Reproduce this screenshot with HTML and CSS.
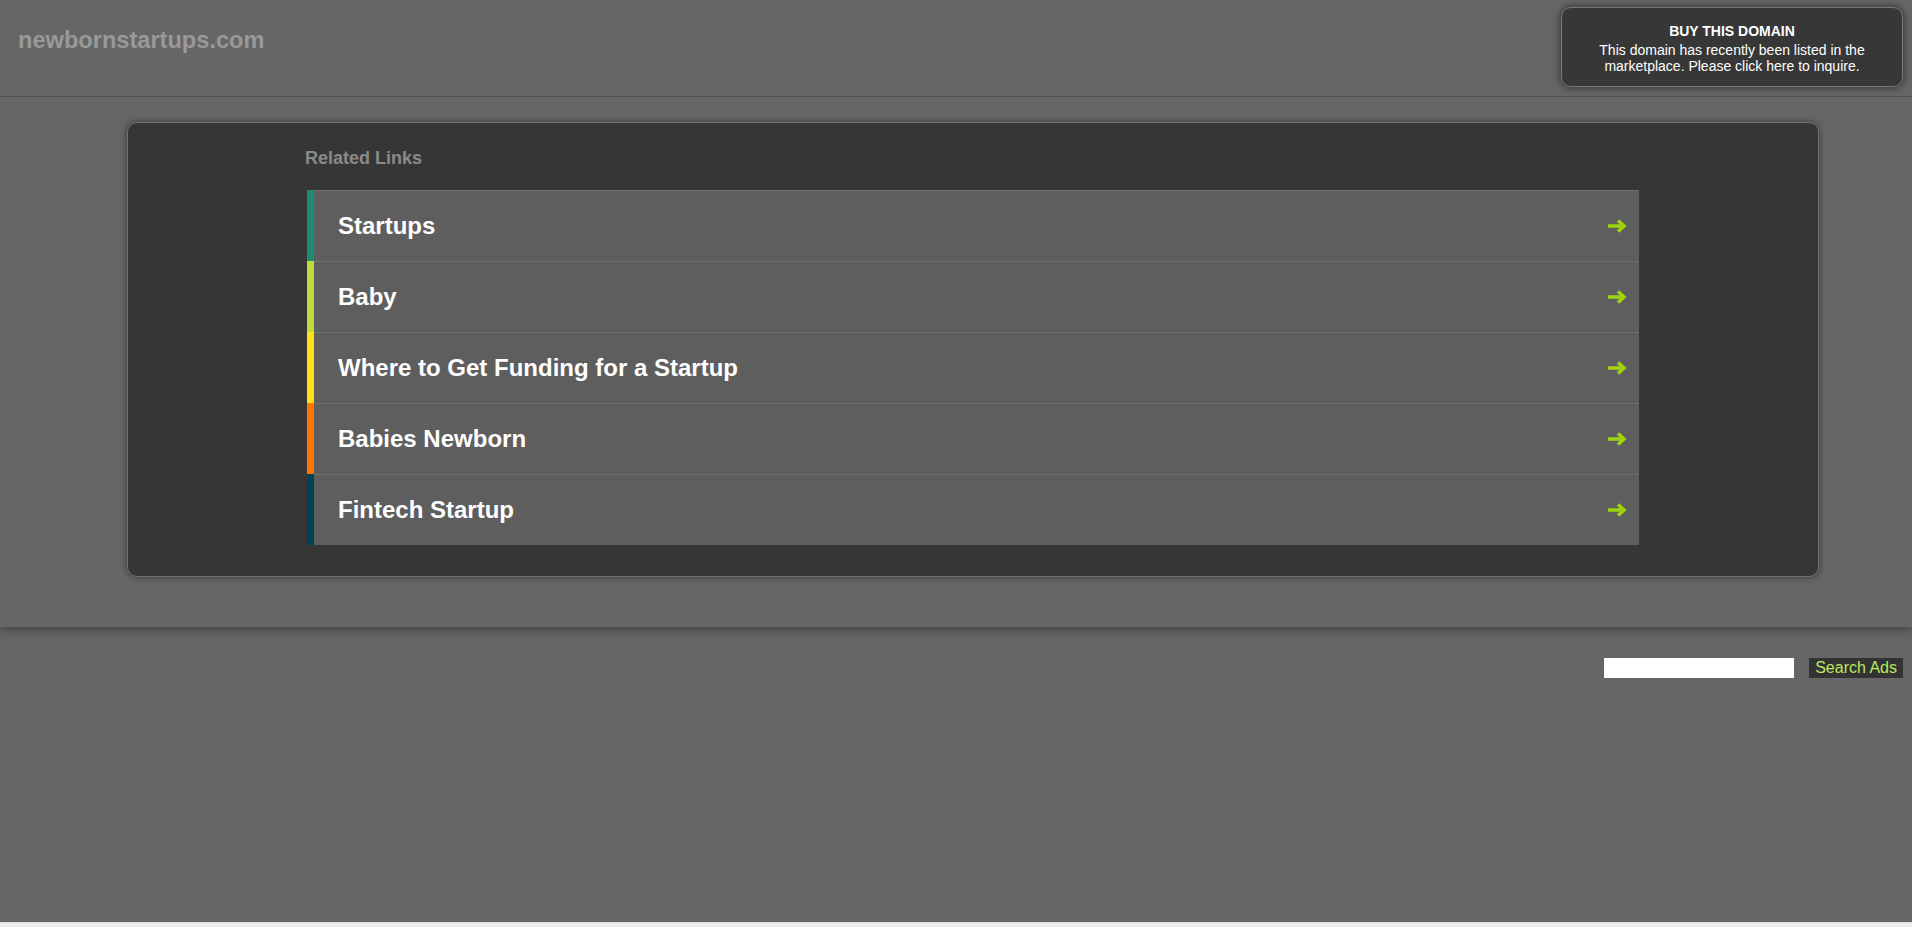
FILE: index.html
```html
<!DOCTYPE html>
<html lang="en">

<head>
    <meta charset="UTF-8">
    <meta name="viewport" content="width=device-width, initial-scale=1.0">
    <title>newbornstartups.com</title>
    <link rel="stylesheet" href="styles.css">
</head>

<body>
    <div class="page">
        <div class="top">
            <!-- Cabecera -->
            <div class="header">
                <div class="logo">newbornstartups.com</div>
                <a class="buy-box" href="#">
                    <span class="buy-title">BUY THIS DOMAIN</span>
                    <span class="buy-text">This domain has recently been listed in the marketplace. Please click here to inquire.</span>
                </a>
            </div>

            <!-- Enlaces relacionados -->
            <div class="panel">
                <div class="panel-inner">
                    <h3 class="related-title">Related Links</h3>
                    <ul class="links">
                        <li class="link-row">
                            <span class="bar bar-teal"></span>
                            <a class="link" href="#">Startups
                                <svg class="arrow" viewBox="0 0 19 14"><path d="M0 7h15M10 1.5l6 5.5-6 5.5" /></svg>
                            </a>
                        </li>
                        <li class="link-row">
                            <span class="bar bar-lime"></span>
                            <a class="link" href="#">Baby
                                <svg class="arrow" viewBox="0 0 19 14"><path d="M0 7h15M10 1.5l6 5.5-6 5.5" /></svg>
                            </a>
                        </li>
                        <li class="link-row">
                            <span class="bar bar-yellow"></span>
                            <a class="link" href="#">Where to Get Funding for a Startup
                                <svg class="arrow" viewBox="0 0 19 14"><path d="M0 7h15M10 1.5l6 5.5-6 5.5" /></svg>
                            </a>
                        </li>
                        <li class="link-row">
                            <span class="bar bar-orange"></span>
                            <a class="link" href="#">Babies Newborn
                                <svg class="arrow" viewBox="0 0 19 14"><path d="M0 7h15M10 1.5l6 5.5-6 5.5" /></svg>
                            </a>
                        </li>
                        <li class="link-row">
                            <span class="bar bar-navy"></span>
                            <a class="link" href="#">Fintech Startup
                                <svg class="arrow" viewBox="0 0 19 14"><path d="M0 7h15M10 1.5l6 5.5-6 5.5" /></svg>
                            </a>
                        </li>
                    </ul>
                </div>
            </div>
        </div>

        <!-- Buscador -->
        <form class="search" onsubmit="return false">
            <input type="text" class="search-input">
            <button class="search-button">Search Ads</button>
        </form>
    </div>
</body>

</html>
```

FILE: styles.css
```css
html {
    background-color: #ededed;
}

body {
    margin: 0;
    font-family: 'Liberation Sans', Arial, sans-serif;
    color: #fff;
}

.page {
    background-color: #666;
    height: 922px;
    border-bottom: 1px solid #dcdcdc;
}

.top {
    position: relative;
    z-index: 1;
    background-color: #666;
    padding-bottom: 50px;
    box-shadow: 0 3px 10px rgba(0, 0, 0, 0.35);
}

.header {
    height: 96px;
    border-bottom: 1px solid #525252;
    display: flex;
    justify-content: space-between;
    align-items: flex-start;
}

.logo {
    padding: 27px 0 0 18px;
    font-size: 23.6px;
    font-weight: bold;
    color: #999;
}

.buy-box {
    margin: 7px 9px 0 0;
    width: 342px;
    height: 80px;
    box-sizing: border-box;
    padding-top: 15px;
    background-color: #373737;
    border: 1px solid #777;
    border-radius: 10px;
    box-shadow: 0 0 8px rgba(0, 0, 0, 0.6);
    text-align: center;
    color: #fff;
    text-decoration: none;
    display: flex;
    flex-direction: column;
    align-items: center;
}

.buy-title {
    font-size: 14px;
    line-height: 16px;
    font-weight: bold;
}

.buy-text {
    margin-top: 3px;
    font-size: 14px;
    line-height: 16px;
    width: 300px;
}

.panel {
    margin: 25px 93px 0 127px;
    background-color: #363636;
    border: 1px solid #727272;
    border-radius: 10px;
    box-shadow: 0 0 6px rgba(0, 0, 0, 0.5);
    padding: 25px 0 31px;
}

.panel-inner {
    width: 1332px;
    margin: 0 auto;
}

.related-title {
    margin: 0 0 22px -2px;
    font-size: 18px;
    line-height: 20px;
    color: #8a8a8a;
}

.links {
    list-style: none;
    margin: 0;
    padding: 0;
}

.link-row {
    display: flex;
    height: 71px;
}

.bar {
    width: 7px;
}

.bar-teal {
    background-color: #1f8a70;
}

.bar-lime {
    background-color: #bedb39;
}

.bar-yellow {
    background-color: #ffe11a;
}

.bar-orange {
    background-color: #fd7400;
}

.bar-navy {
    background-color: #004358;
}

.link {
    flex: 1;
    display: flex;
    align-items: center;
    justify-content: space-between;
    padding: 0 12px 0 24px;
    background-color: #5e5e5e;
    border-top: 1px solid #6e6e6e;
    color: #fff;
    text-decoration: none;
    font-size: 24px;
    font-weight: bold;
}

.arrow {
    width: 19px;
    height: 14px;
    fill: none;
    stroke: #a0d30b;
    stroke-width: 3.5;
}

.search {
    display: flex;
    justify-content: flex-end;
    gap: 15px;
    padding: 31px 9px 0 0;
}

.search-input {
    width: 190px;
    height: 20px;
    box-sizing: border-box;
    border: none;
    padding: 0 4px;
    background-color: #fff;
}

.search-button {
    height: 20px;
    padding: 0 6px;
    border: none;
    background-color: #333;
    color: #bde85c;
    font-family: 'Liberation Sans', Arial, sans-serif;
    font-size: 16px;
    line-height: 20px;
    cursor: pointer;
}
```
